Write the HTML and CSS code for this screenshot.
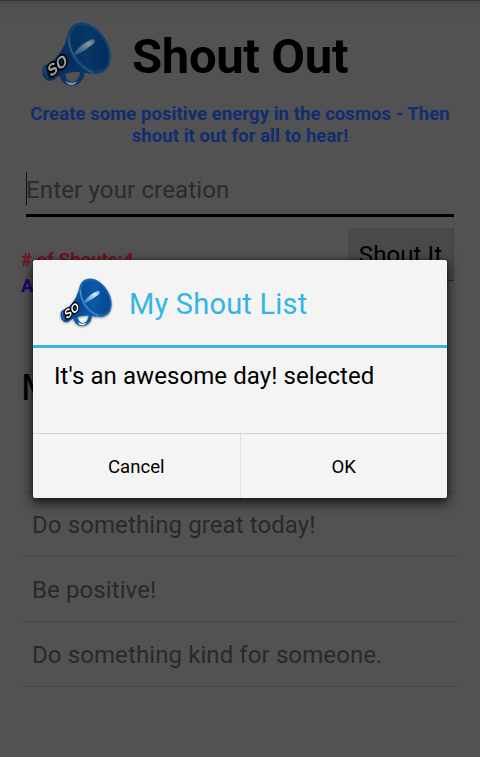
FILE: index.html
```html
<!DOCTYPE html>
<html lang="en">
<head>
<meta charset="utf-8">
<title>Shout Out</title>
<link rel="stylesheet" href="styles.css">
</head>
<body>
<svg class="defs" aria-hidden="true">
  <defs>
    <linearGradient id="body" x1="0" y1="0" x2="1" y2="1">
      <stop offset="0" stop-color="#1a70c0"/><stop offset=".5" stop-color="#08458f"/><stop offset="1" stop-color="#0e62b4"/>
    </linearGradient>
    <linearGradient id="bell" x1="0" y1="0" x2="1" y2="1">
      <stop offset="0" stop-color="#07458f"/><stop offset=".45" stop-color="#0b58a8"/><stop offset="1" stop-color="#053f88"/>
    </linearGradient>
    <linearGradient id="shine" x1="0" y1="1" x2="1" y2="0">
      <stop offset="0" stop-color="#6fb2e8" stop-opacity=".5"/><stop offset=".7" stop-color="#d5ecff"/><stop offset="1" stop-color="#d5ecff" stop-opacity=".5"/>
    </linearGradient>
    <filter id="soft" x="-20%" y="-20%" width="140%" height="140%"><feGaussianBlur stdDeviation="2"/></filter>
  </defs>
  <symbol id="megaphone" viewBox="36 35 207 193">
    <path d="M87 186C87 242 164 242 164 183L150 184C148 224 109 226 106 190Z" fill="#0f5ba6"/>
    <path d="M106 212Q123 224 142 214L134 223Q121 228 112 221Z" fill="#e9f2fa"/>
    <path d="M112 75C105 110 86 136 66 155L43 166C34 172 36 201 46 206C57 217 70 212 76 205L91 196C125 182 160 183 184 193Z" fill="url(#body)"/>
    <path d="M44 170Q40 190 52 204" fill="none" stroke="#3f8fd0" stroke-width="3"/>
    <ellipse cx="177" cy="114" rx="57" ry="84" transform="rotate(-32 177 114)" fill="#1265b2"/>
    <ellipse cx="179" cy="113" rx="50" ry="77" transform="rotate(-32 179 113)" fill="url(#bell)" stroke="#1f76c2" stroke-width="2"/>
    <path d="M116 80C115 120 145 170 188 187" fill="none" stroke="#6badde" stroke-width="3"/>
    <path d="M132 129Q156 98 188 86Q201 89 191 100Q168 120 137 136Z" fill="url(#shine)" filter="url(#soft)"/>
    <text class="so" transform="translate(61 202) rotate(-38) skewX(-18)">SO</text>
  </symbol>
</svg>

<main class="app">
  <header class="head">
    <svg class="logo"><use href="#megaphone"/></svg>
    <h1>Shout Out</h1>
  </header>
  <p class="tagline"><span class="t1">Create some positive energy in the cosmos - Then</span><br><span class="t2">shout it out for all to hear!</span></p>
  <div class="field"><span>Enter your creation</span></div>
  <section class="row">
    <div class="stats"><div class="count">#&nbsp;of Shouts:4</div><div class="second">A</div></div>
    <div class="button">Shout It</div>
  </section>
  <h2>M</h2>
  <ul class="list">
    <li class="empty"></li>
    <li>Do something great today!</li>
    <li>Be positive!</li>
    <li>Do something kind for someone.</li>
  </ul>
</main>

<section class="dialog" role="dialog">
  <div class="dialog-head">
    <svg class="dialog-logo"><use href="#megaphone"/></svg>
    <span class="dialog-title">My Shout List</span>
  </div>
  <div class="message">It's an awesome day! selected</div>
  <div class="actions"><div>Cancel</div><div>OK</div></div>
</section>
</body>
</html>
```
FILE: styles.css
```css
* { box-sizing: border-box; }
body { margin: 0; background: #525252; font-family: Roboto, sans-serif; color: #000; }
.defs { position: absolute; width: 0; height: 0; }
.so { font: bold 46px "Liberation Sans", sans-serif; letter-spacing: 1px; fill: #fff; stroke: #000; stroke-width: 10px; paint-order: stroke; stroke-linejoin: round; }
.app { height: 757px; overflow: hidden; padding: 22px 21px 0; background: linear-gradient(#363636 0, #363636 1px, #494949 1px, #505050 8px, #525252 20px); }
.head { display: flex; height: 81px; padding-left: 21px; }
.logo { width: 69px; height: 64px; filter: brightness(.62); }
h1 { margin: 7px 0 0 21px; font-size: 49px; line-height: 56px; letter-spacing: -.35px; font-weight: 700; white-space: nowrap; }
.tagline { margin: 0; text-align: center; font-weight: 700; font-size: 18.5px; letter-spacing: .06px; line-height: 22px; color: #102d70; white-space: nowrap; }
.field { margin: 23px 5px 0; height: 47px; border-bottom: 3px solid #000; padding-top: 2px; }
.field span { display: block; height: 33px; border-left: 1px solid #111; font-size: 24px; letter-spacing: .15px; line-height: 36px; text-indent: -1px; color: #2b2b2b; }
.row { display: flex; justify-content: space-between; height: 132px; padding: 11px 5px 0 0; }
.stats { font-size: 18.5px; font-weight: 700; line-height: 26px; padding-top: 19px; letter-spacing: .1px; }
.count { color: #76101f; }
.second { color: #240070; }
.button { width: 106px; height: 53px; background: #494949; border-right: 1px solid #414141; border-bottom: 1px solid #303030; text-align: center; font-size: 24px; letter-spacing: .1px; line-height: 55px; }
h2 { margin: 17px 0 0; font-weight: 400; font-size: 37px; line-height: 44px; }
.list { list-style: none; margin: 0; padding: 0; }
.list li { height: 65px; border-bottom: 1px solid #484848; padding-left: 11px; font-size: 24px; letter-spacing: .1px; line-height: 67px; color: #292929; white-space: nowrap; }
.list .empty { height: 82px; }
.dialog { position: absolute; left: 33px; top: 260px; width: 414px; height: 238px; background: #f4f4f4; border-radius: 2px; box-shadow: 0 0 2px rgba(0,0,0,.5), 0 4px 12px 1px rgba(0,0,0,.75); }
.dialog-head { display: flex; height: 88px; border-bottom: 3px solid #33b5e5; padding: 18px 0 0 27px; }
.dialog-logo { width: 52px; height: 48px; filter: drop-shadow(0 1px 1px rgba(0,0,0,.4)); }
.dialog-title { margin-left: 17px; font-size: 29px; letter-spacing: .2px; line-height: 52px; color: #33b5e5; white-space: nowrap; }
.message { height: 85px; padding: 12px 21px; font-size: 24px; letter-spacing: .08px; line-height: 32px; white-space: nowrap; }
.actions { display: flex; height: 65px; border-top: 1px solid #d6d6d6; }
.actions div { flex: 1; text-align: center; font-size: 18.6px; line-height: 66px; }
.actions div + div { border-left: 1px solid #e2e2e2; }
```
